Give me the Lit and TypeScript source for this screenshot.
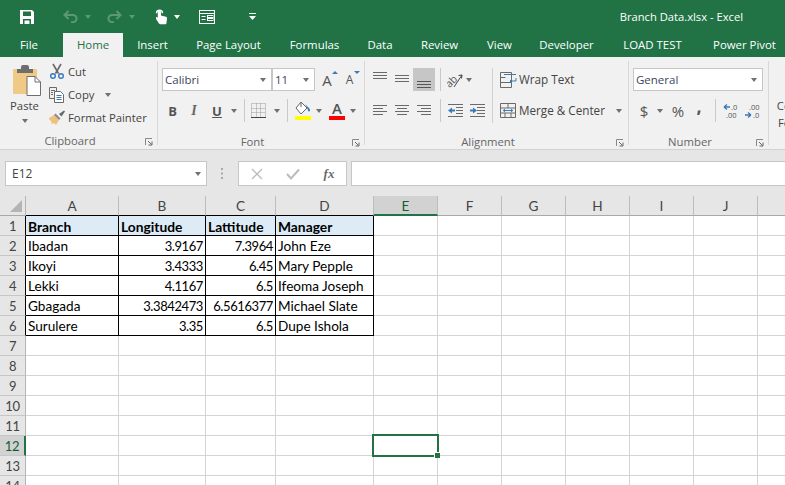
import { LitElement, html, css } from "lit";
import { customElement } from "lit/decorators.js";

const tabs = ["File", "Home", "Insert", "Page Layout", "Formulas", "Data", "Review", "View", "Developer", "LOAD TEST", "Power Pivot"];
const cols = ["A", "B", "C", "D", "E", "F", "G", "H", "I", "J", "K"];
const data: [string, string, string, string][] = [
  ["Branch", "Longitude", "Lattitude", "Manager"],
  ["Ibadan", "3.9167", "7.3964", "John Eze"],
  ["Ikoyi", "3.4333", "6.45", "Mary Pepple"],
  ["Lekki", "4.1167", "6.5", "Ifeoma Joseph"],
  ["Gbagada", "3.3842473", "6.5616377", "Michael Slate"],
  ["Surulere", "3.35", "6.5", "Dupe Ishola"],
];

const launcher = html`<svg class="launch" width="8" height="8" viewBox="0 0 8 8"><path d="M.5 7V.5H7" fill="none" stroke="#888"/><path d="M3 3l3.500 3.500M7 3.500V7H3.500" fill="none" stroke="#666"/></svg>`;

@customElement("app-root")
export class AppRoot extends LitElement {
  static styles = css`
    :host { display: block; width: 785px; height: 485px; overflow: hidden; background: #fff; font-family: "Open Sans", "Noto Sans", sans-serif; color: #444; font-size: 11.3px; }
    svg { display: block; }
    .qat { height: 33px; background: #217346; display: grid; grid-template-columns: 17px 20px 23px 20px 16px 8px 20px 16px 11px 20px 12px 14px 20px 27px 16px 1fr; align-items: center; justify-items: center; color: #fff; }
    .title { justify-self: end; margin-right: 42px; font-size: 11.2px; color: #fff; }
    .dd { width: 0; height: 0; border-left: 3.5px solid transparent; border-right: 3.5px solid transparent; border-top: 4px solid #707070; }
    .dd.w { border-top-color: #fff; }
    .dd.dim { border-top-color: #5c9776; }
    .tabs { height: 24px; background: #217346; display: grid; grid-template-columns: 63px 60px 59px 93px 79px 52px 67px 53px 81px 91px 93px; color: #fff; font-size: 11.4px; line-height: 23px; text-align: center; white-space: nowrap; }
    .tab:first-child { padding-right: 5px; }
    .tab.on { background: #f1f1f1; color: #217346; }
    .ribbon { background: #f1f1f1; border-bottom: 1px solid #d2d2d2; display: flex; padding-top: 4px; height: 88px; white-space: nowrap; }
    .group { height: 84px; border-right: 1px solid #d8d8d8; box-sizing: border-box; display: flex; flex-direction: column; flex: none; }
    .g-clip { width: 158px; }
    .g-font { width: 207px; padding-left: 4px; }
    .g-align { width: 264px; padding-left: 4px; }
    .g-num { width: 140px; padding-left: 4px; }
    .body { height: 61px; padding-top: 7px; box-sizing: content-box; display: flex; flex-direction: column; gap: 8px; }
    .row { height: 23px; display: grid; align-items: center; justify-items: center; }
    .foot { margin-top: 15px; height: 6px; display: flex; align-items: center; color: #666; line-height: 6px; }
    .g-clip .foot { margin-top: 4px; }
    .foot span { flex: 1; text-align: center; }
    .launch { margin: 2px 4px 0 5px; flex: none; }
    .g-font .foot, .g-align .foot, .g-num .foot { margin-left: -4px; }

    .clipbody { height: 73px; display: flex; }
    .paste { width: 49px; display: flex; flex-direction: column; align-items: center; padding-top: 4px; box-sizing: border-box; }
    .paste svg { margin-left: 5px; }
    .paste span { margin-top: 3px; line-height: 14px; }
    .paste .dd { margin-top: 6px; }
    .clipcol { display: grid; grid-template-rows: 20px 27px 18px; }
    .ci { display: flex; align-items: center; gap: 3px; }
    .ci .dd { margin-left: 8px; }

    .combo { height: 23px; background: #fff; border: 1px solid #c6c6c6; box-sizing: border-box; display: flex; align-items: center; justify-content: space-between; padding: 0 5px 0 2px; justify-self: stretch; color: #3c4660; font-size: 11.5px; }
    .f1 { grid-template-columns: 110px 43px 1px 22px 23px; width: 199px; }
    .f1 .gap { width: 0; }
    .f2 { grid-template-columns: 21px 22px 24px 9px 6px 1px 27px 9px 6px 1px 6px 18px 14px 22px 10px; }
    .f3 { grid-template-columns: 130px; }
    .n2 { grid-template-columns: 22px 10px 2px 22px 20px 6px 1px 3px 22px 23px; }
    .sep { width: 1px; height: 23px; background: #c8c8c8; }
    .b { font-weight: 700; font-size: 13px; color: #555; }
    .i { font-family: "Liberation Serif", serif; font-style: italic; font-weight: 700; font-size: 14px; color: #666; }
    .u { font-weight: 700; font-size: 13px; color: #555; text-decoration: underline; }
    .bigA { position: relative; font-size: 15px; color: #555; line-height: 20px; }
    .smA { font-size: 12px; }
    .tri { position: absolute; right: -6px; top: 1px; width: 0; height: 0; border-left: 3px solid transparent; border-right: 3px solid transparent; border-bottom: 3px solid #3a7ab8; }
    .tri.dn { border-bottom: 0; border-top: 3px solid #3a7ab8; right: -7px; top: 1px; }
    .colorA { display: flex; flex-direction: column; align-items: center; width: 16px; font-size: 15px; font-weight: 600; color: #555; line-height: 15px; }
    .colorA i { display: block; width: 16px; height: 4px; background: #f00; }
    .alignwrap { display: flex; height: 61px; padding-top: 7px; box-sizing: content-box; }
    .alignleft { display: flex; flex-direction: column; gap: 8px; }
    .a-row { grid-template-columns: 22px 22px 22px 5px 1px 3px 22px 22px; }
    .active { background: #c6c6c6; width: 22px; height: 23px; display: flex; justify-content: center; }
    .bigsep { width: 1px; height: 55px; background: #d0d0d0; margin-left: 4px; margin-right: 7px; }
    .alignright { display: flex; flex-direction: column; gap: 8px; }
    .ar { height: 23px; display: flex; align-items: center; gap: 2px; font-size: 11.7px; }
    .ar span { padding-bottom: 2px; }
    .ar .dd { margin-left: 9px; }
    .self { justify-self: start; }
    .dollar { font-size: 15px; color: #555; }
    .pct { font-size: 15px; color: #555; }
    .comma { font-size: 15px; font-weight: 800; color: #555; line-height: 15px; padding-bottom: 6px; }
    .cond { width: 66px; margin-left: 5px; padding-top: 36px; line-height: 17px; text-align: center; flex: none; }

    .fbar { height: 46px; background: #e6e6e6; display: flex; align-items: center; padding-left: 5px; box-sizing: border-box; white-space: nowrap; padding-top: 1px; }
    .name { width: 202px; height: 25px; background: #fff; border: 1px solid #c6c6c6; box-sizing: border-box; display: flex; align-items: center; justify-content: space-between; padding: 0 5px 0 6px; font-size: 12px; color: #444; flex: none; }
    .dots { width: 31px; display: flex; justify-content: center; flex: none; }
    .fbtns { width: 109px; height: 25px; background: #fff; border: 1px solid #c6c6c6; box-sizing: border-box; display: grid; grid-template-columns: 36px 36px 36px; align-items: center; justify-items: center; flex: none; }
    .fx { font-family: "Liberation Serif", serif; font-style: italic; font-weight: 700; font-size: 13px; color: #6a6a6a; }
    .finput { margin-left: 4px; height: 25px; flex: 1; background: #fff; border: 1px solid #c6c6c6; border-right: 0; box-sizing: border-box; }

    .sheet { height: 289px; overflow: hidden; display: grid; grid-template-columns: 26px 93px 87px 70px 98px repeat(7, 64px); grid-auto-rows: 20px; width: 822px; font-family: Lato, "Liberation Sans", sans-serif; font-size: 13.6px; color: #000; }
    .sheet > div { box-sizing: border-box; border-right: 1px solid #d4d4d4; border-bottom: 1px solid #d4d4d4; line-height: 21px; padding: 0 2px; white-space: nowrap; }
    .sheet > .ch { background: #e6e6e6; border-right: 1px solid #bdbdbd; border-bottom: 1px solid #a8a8a8; color: #444; text-align: center; font-size: 13.6px; }
    .sheet > .ch.bk { border-bottom-color: #000; }
    .sheet > .ch.sel { background: #d2d2d2; border-bottom: 2px solid #217346; color: #0f5f35; }
    .sheet > .corner { background: #e6e6e6; border-right: 1px solid #b4b4b4; border-bottom: 1px solid #a8a8a8; padding: 4px 0 0 10px; }
    .sheet > .rh { background: #e6e6e6; border-right: 1px solid #b4b4b4; border-bottom: 1px solid #c6c6c6; color: #444; text-align: center; font-size: 13px; letter-spacing: -0.3px; padding: 0; }
    .sheet > .rh.bk { border-right-color: #000; }
    .sheet > .rh.sel { background: #d2d2d2; border-right: 2px solid #217346; color: #0f5f35; }
    .sheet > .cell.bx { border-right-color: #000; border-bottom-color: #000; }
    .sheet > .cell.hd { background: #ddebf7; font-weight: 700; font-size: 13.8px; }
    .sheet > .cell.num { text-align: right; font-size: 13px; letter-spacing: -0.4px; }
    .sheet > .cell.host { position: relative; }
    .selbox { position: absolute; left: -2px; top: -2px; width: 67px; height: 23px; box-sizing: border-box; border: 2px solid #217346; }
    .handle { position: absolute; right: -3px; bottom: -3px; width: 5px; height: 5px; background: #217346; box-shadow: -1px -1px 0 #fff; }
  `;

  private qat() {
    return html`<div class="qat">
      <span></span>
      <svg width="14" height="14" viewBox="0 0 14 14"><path fill-rule="evenodd" d="M0 0h12l2 2v12H0zM3 1.500v4.500h8V1.500zM3 9v5h1.500v-3.500h5V14H11V9z" fill="#fff"/><rect x="5.500" y="11.500" width="2" height="2.500" fill="#fff"/></svg>
      <span></span>
      <svg width="15" height="13" viewBox="0 0 15 13"><path d="M5.500 1L1.500 5l4 4M1.500 5H10a3.600 3.600 0 0 1 0 7.200H8" fill="none" stroke="#5c9776" stroke-width="2"/></svg>
      <i class="dd dim"></i>
      <span></span>
      <svg width="15" height="13" viewBox="0 0 15 13"><path d="M9.500 1l4 4-4 4M13.500 5H5a3.600 3.600 0 0 0 0 7.200h2" fill="none" stroke="#5c9776" stroke-width="2"/></svg>
      <i class="dd dim"></i>
      <span></span>
      <svg width="13" height="17" viewBox="0 0 13 17"><path d="M4 15.500L1 11V9l1.800.6V4a1.600 1.600 0 0 1 3.200 0v3.500l5 1.200c.8.2 1 .8 1 1.500l-.6 5.300a1 1 0 0 1-1 .8H5z" fill="#fff"/><path d="M1.500 5.200a3 3 0 1 1 6 0" fill="none" stroke="#fff" stroke-width="1.400"/></svg>
      <i class="dd w"></i>
      <span></span>
      <svg width="16" height="14" viewBox="0 0 16 14"><rect x=".5" y=".5" width="15" height="13" fill="none" stroke="#fff"/><path d="M.5 3.500h15M2.500 6.500h4M2.500 9.500h4" stroke="#fff" fill="none"/><rect x="8.500" y="5.500" width="5.500" height="2" fill="none" stroke="#fff"/><rect x="8.500" y="8.500" width="5.500" height="2" fill="none" stroke="#fff"/></svg>
      <span></span>
      <svg width="9" height="8" viewBox="0 0 9 8"><path d="M1 .5h7" stroke="#fff" fill="none"/><path d="M1 3h7L4.500 7z" fill="#fff"/></svg>
      <span class="title">Branch Data.xlsx - Excel</span>
    </div>`;
  }

  private clipboard() {
    return html`<div class="group g-clip">
      <div class="clipbody">
        <div class="paste">
          <svg width="30" height="31" viewBox="0 0 30 31">
            <rect x="1" y="4" width="24" height="25" rx="1" fill="#efc985"/>
            <path d="M5 8V4h4V2a2 2 0 0 1 2-2h4a2 2 0 0 1 2 2v2h4v4z" fill="#6e6e6e"/>
            <path d="M15 11.500h8l5.500 5.500v13.500H15z" fill="#fff" stroke="#6e6e6e"/>
            <path d="M23 11.500V17h5.500" fill="none" stroke="#6e6e6e"/>
          </svg>
          <span>Paste</span>
          <i class="dd"></i>
        </div>
        <div class="clipcol">
          <div class="ci"><svg width="16" height="16" viewBox="0 0 16 16"><path d="M4 1l5.500 9.500M12 1L6.500 10.500" stroke="#6a6a6a" stroke-width="1.600" fill="none"/><circle cx="4" cy="13" r="2.300" fill="none" stroke="#3a7ab8" stroke-width="1.400"/><circle cx="12" cy="13" r="2.300" fill="none" stroke="#3a7ab8" stroke-width="1.400"/></svg><span>Cut</span></div>
          <div class="ci"><svg width="16" height="16" viewBox="0 0 16 16"><path d="M.5.500h7V4M.5.500v11H5" fill="none" stroke="#6a6a6a"/><path d="M5.500 4.500h6l3 3v8h-9z" fill="#fff" stroke="#6a6a6a"/><path d="M7.500 8.500h5M7.500 10.500h5M7.500 12.500h5" stroke="#3a7ab8" fill="none"/><path d="M2 3.500h4M2 5.500h2M2 7.500h2" stroke="#6a6a6a" fill="none"/></svg><span>Copy</span><i class="dd"></i></div>
          <div class="ci"><svg width="16" height="15" viewBox="0 0 16 15"><path d="M0 8l5-3 5 5-3 5c-1-1.500-3-2-3-2s0 1-1 1 0-2-1-3-2-1-2-3z" fill="#efc17a"/><path d="M5 5l5 5 1.500-1.500-5-5z" fill="#8a8a8a"/><path d="M10 4l5-3.500 1 1-3.500 5z" fill="#6a6a6a"/></svg><span>Format Painter</span></div>
        </div>
      </div>
      <div class="foot"><span>Clipboard</span>${launcher}</div>
    </div>`;
  }

  private font() {
    return html`<div class="group g-font">
      <div class="body">
        <div class="row f1">
          <div class="combo"><span>Calibri</span><i class="dd"></i></div>
          <div class="combo"><span>11</span><i class="dd"></i></div>
          <span class="gap"></span>
          <span class="bigA">A<i class="tri"></i></span>
          <span class="bigA smA">A<i class="tri dn"></i></span>
        </div>
        <div class="row f2">
          <span class="b">B</span><span class="i">I</span><span class="u">U</span><i class="dd"></i><span></span><span class="sep"></span>
          <svg width="15" height="15" viewBox="0 0 15 15"><path d="M.5.500h14v14H.5zM5.500.5v14M9.500.5v14M.5 5.500h14M.5 9.500h14" fill="none" stroke="#9a9a9a" stroke-dasharray="1 1"/><path d="M0 14.500h15" stroke="#444"/></svg>
          <i class="dd"></i><span></span><span class="sep"></span><span></span>
          <svg width="16" height="19" viewBox="0 0 16 19"><path d="M6 1L1 7l5 6 6-6z" fill="#fff" stroke="#666"/><path d="M6 1v5" stroke="#666"/><path d="M10 3l3 3c1 1 2 2 2 3.500a1 1 0 0 1-2 0c0-1-1-2-1-3z" fill="#3a7ab8"/><rect y="15" width="16" height="4" fill="#ff0"/></svg>
          <i class="dd"></i>
          <div class="colorA"><span>A</span><i></i></div>
          <i class="dd"></i>
        </div>
      </div>
      <div class="foot"><span>Font</span>${launcher}</div>
    </div>`;
  }

  private lines(ys: number[], spans: [number, number][], c = "#6a6a6a") {
    const d = ys.map((y, i) => {
      const [a, b] = spans[i % spans.length];
      return `M${a} ${y + 0.5}H${b}`;
    }).join("");
    return html`<svg width="16" height="23" viewBox="0 0 16 23"><path d=${d} stroke=${c} fill="none"/></svg>`;
  }

  private alignment() {
    const full: [number, number] = [1, 15];
    return html`<div class="group g-align">
      <div class="alignwrap">
        <div class="alignleft">
          <div class="row a-row">
            ${this.lines([4, 7, 10], [full])}
            ${this.lines([7, 10, 13], [full])}
            <div class="active">${this.lines([13, 16, 19], [full], "#555")}</div>
            <span></span><span class="sep"></span><span></span>
            <svg width="16" height="16" viewBox="0 0 16 16"><text x="-1" y="12" font-size="10.500" font-family="Open Sans" fill="#555" transform="rotate(-45 6 10)">ab</text><path d="M7 15L15 3M15 3l-3.500.5M15 3l-.5 3.500" stroke="#444" fill="none"/></svg>
            <i class="dd self"></i>
          </div>
          <div class="row a-row">
            ${this.lines([6, 9, 12, 15], [[1, 15], [1, 11]])}
            ${this.lines([6, 9, 12, 15], [[1, 15], [3, 13]])}
            ${this.lines([6, 9, 12, 15], [[1, 15], [5, 15]])}
            <span></span><span class="sep"></span><span></span>
            <svg width="16" height="23" viewBox="0 0 16 23"><path d="M1 5.500h15M9 8.500h7M9 11.500h7M9 14.500h7M1 17.500h15" stroke="#6a6a6a" fill="none"/><path d="M1 11.500l4-3v2h3v2H5v2z" fill="#3a7ab8"/></svg>
            <svg width="16" height="23" viewBox="0 0 16 23"><path d="M1 5.500h15M8 8.500h8M8 11.500h8M8 14.500h8M1 17.500h15" stroke="#6a6a6a" fill="none"/><path d="M8 11.500l-4-3v2H1v2h3v2z" fill="#3a7ab8"/></svg>
          </div>
        </div>
        <span class="bigsep"></span>
        <div class="alignright">
          <div class="ar">
            <svg width="17" height="16" viewBox="0 0 17 16"><path d="M.5.500h11v15H.5zM.5 5.500h5M.5 10.500h11" stroke="#6a6a6a" fill="none"/><path d="M4 2.500h12" stroke="#3a7ab8" fill="none"/><path d="M16 6v3h-6M12 7l-2 2 2 2" stroke="#3a7ab8" fill="none"/></svg>
            <span>Wrap Text</span>
          </div>
          <div class="ar">
            <svg width="17" height="16" viewBox="0 0 17 16"><path d="M.5.500h15v14H.5zM.5 5h15M.5 10h15M8 .5V5M5 10v4.500M11 10v4.500" stroke="#6a6a6a" fill="none"/><path d="M3 7.500h10" stroke="#3a7ab8" fill="none"/><path d="M3 7.500l2-2v4zM13 7.500l-2-2v4z" fill="#3a7ab8"/></svg>
            <span>Merge &amp; Center</span><i class="dd"></i>
          </div>
        </div>
      </div>
      <div class="foot"><span>Alignment</span>${launcher}</div>
    </div>`;
  }

  private number() {
    return html`<div class="group g-num">
      <div class="body">
        <div class="row f3"><div class="combo"><span>General</span><i class="dd"></i></div></div>
        <div class="row n2">
          <span class="dollar">$</span><i class="dd"></i><span></span>
          <span class="pct">%</span><span class="comma">,</span><span></span><span class="sep"></span><span></span>
          <svg width="15" height="16" viewBox="0 0 15 16"><path d="M1 4h6M1 4l3-2.500M1 4l3 2.500" stroke="#3a7ab8" stroke-width="1.300" fill="none"/><text x="8" y="7" font-size="7.500" fill="#555" font-family="Open Sans">.0</text><text x="3" y="15" font-size="7.500" fill="#555" font-family="Open Sans">.00</text></svg>
          <svg width="15" height="16" viewBox="0 0 15 16"><path d="M0 12h6M6 12L3 9.500M6 12l-3 2.500" stroke="#3a7ab8" stroke-width="1.300" fill="none"/><text x="4" y="7" font-size="7.500" fill="#555" font-family="Open Sans">.00</text><text x="8" y="15" font-size="7.500" fill="#555" font-family="Open Sans">.0</text></svg>
        </div>
      </div>
      <div class="foot"><span>Number</span>${launcher}</div>
    </div>`;
  }

  private fbar() {
    return html`<div class="fbar">
      <div class="name"><span>E12</span><i class="dd"></i></div>
      <div class="dots"><svg width="3" height="11" viewBox="0 0 3 11"><path d="M0 0h2v2H0zM0 4.500h2v2H0zM0 9h2v2H0z" fill="#a8a8a8"/></svg></div>
      <div class="fbtns">
        <svg width="12" height="12" viewBox="0 0 12 12"><path d="M1 1l10 10M11 1L1 11" stroke="#bcbcbc" stroke-width="1.300" fill="none"/></svg>
        <svg width="14" height="12" viewBox="0 0 14 12"><path d="M1 6l4 4.500L13 1.500" stroke="#bcbcbc" stroke-width="2" fill="none"/></svg>
        <span class="fx">fx</span>
      </div>
      <div class="finput"></div>
    </div>`;
  }

  private sheet() {
    const rows = [];
    rows.push(html`<div class="corner"><svg width="12" height="12" viewBox="0 0 12 12"><path d="M12 0v12H0z" fill="#b4b4b4"/></svg></div>`);
    cols.forEach((c, i) => rows.push(html`<div class="ch ${i < 4 ? "bk" : ""} ${c === "E" ? "sel" : ""}">${c}</div>`));
    for (let r = 1; r <= 14; r++) {
      const inTable = r <= 6;
      rows.push(html`<div class="rh ${inTable ? "bk" : ""} ${r === 12 ? "sel" : ""}">${r}</div>`);
      cols.forEach((c, i) => {
        const row = data[r - 1];
        if (inTable && i < 4) {
          const num = r > 1 && (i === 1 || i === 2);
          rows.push(html`<div class="cell bx ${r === 1 ? "hd" : ""} ${num ? "num" : ""}">${row[i]}</div>`);
        } else if (r === 12 && c === "E") {
          rows.push(html`<div class="cell host"><div class="selbox"><div class="handle"></div></div></div>`);
        } else {
          rows.push(html`<div class="cell"></div>`);
        }
      });
    }
    return html`<div class="sheet">${rows}</div>`;
  }

  render() {
    return html`
      ${this.qat()}
      <div class="tabs">${tabs.map((t) => html`<div class="tab ${t === "Home" ? "on" : ""}">${t}</div>`)}</div>
      <div class="ribbon">
        ${this.clipboard()}${this.font()}${this.alignment()}${this.number()}
        <div class="cond">Conditional<br />Formatting</div>
      </div>
      ${this.fbar()}
      ${this.sheet()}
    `;
  }
}
